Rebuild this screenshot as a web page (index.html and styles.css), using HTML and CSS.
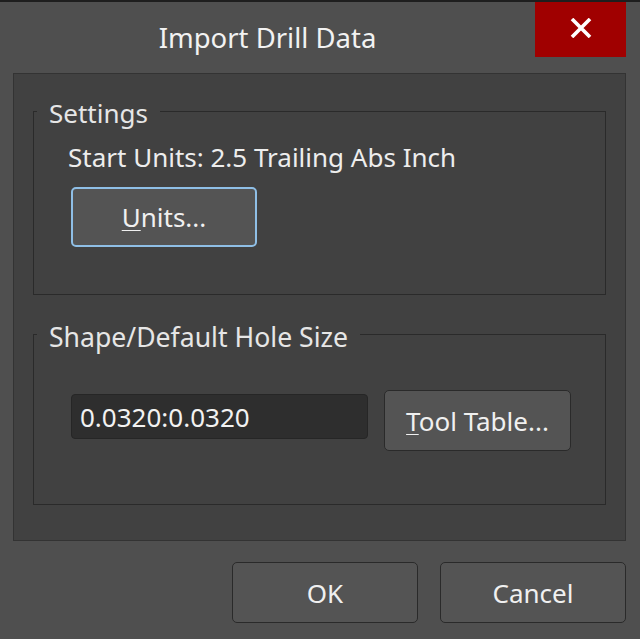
FILE: index.html
```html
<!DOCTYPE html>
<html>
<head>
<meta charset="utf-8">
<link rel="stylesheet" href="styles.css">
</head>
<body>
<div class="window">
  <div class="titlebar">
    <div class="title">Import Drill Data</div>
    <div class="close">
      <svg width="22" height="20" viewBox="0 0 22 20"><path d="M2 1 L20 19 M20 1 L2 19" stroke="#fff" stroke-width="3.6" fill="none"/></svg>
    </div>
  </div>
  <div class="panel">
    <div class="group group-settings">
      <div class="legend">Settings</div>
      <div class="line">Start Units: 2.5 Trailing Abs Inch</div>
      <button class="btn btn-focus units"><u>U</u>nits...</button>
    </div>
    <div class="group group-shape">
      <div class="legend">Shape/Default Hole Size</div>
      <div class="row">
        <div class="input">0.0320:0.0320</div>
        <button class="btn tool"><u>T</u>ool Table...</button>
      </div>
    </div>
  </div>
  <div class="footer">
    <button class="btn foot">OK</button>
    <button class="btn foot">Cancel</button>
  </div>
</div>
</body>
</html>
```
FILE: styles.css
```css
* { box-sizing: border-box; }
html, body { margin: 0; padding: 0; background: #4f4f4f; }
body { font-family: "Noto Sans", "Open Sans", sans-serif; color: #ededed; }
.window {
  width: 640px; height: 639px; background: #4f4f4f;
  border-top: 2px solid #1e1e1e; overflow: hidden;
}
.titlebar { display: flex; height: 55px; }
.title {
  flex: 1; text-align: center; font-size: 27.5px; line-height: 40px;
  padding-top: 16px; color: #f2f2f2;
}
.close {
  width: 91px; height: 55px; margin-right: 14px; background: #a00000;
  display: flex; align-items: center; justify-content: center;
  padding-bottom: 4px;
}
.panel {
  margin: 16px 14px 0 13px; height: 468px; background: #414141;
  border: 1px solid #333; padding: 37px 19px 0 19px;
}
.group { border: 1px solid #2a2a2a; }
.legend {
  display: block; width: max-content; background: #414141; font-size: 26px; line-height: 32px;
  padding: 0 12px; margin: -15px 0 0 3px; color: #e6e6e6;
}
.group-settings { height: 184px; }
.group-shape { height: 171px; margin-top: 39px; }
.group-shape .legend { margin-top: -14px; font-size: 26.6px; }
.line { font-size: 26px; line-height: 32px; margin: 12px 0 0 34px; }
.btn {
  font-family: inherit; color: #f0f0f0; font-size: 26px; line-height: 32px;
  background: #545454; border: 1px solid #2a2a2a; border-radius: 5px;
  padding: 0; cursor: default;
}
.btn u { text-decoration-thickness: 1px; text-underline-offset: 3px; }
.btn-focus { border: 2px solid #8fbfe6; }
.units { width: 186px; height: 60px; margin: 14px 0 0 37px; display: block; }
.row { display: flex; align-items: flex-start; margin: 37px 0 0 37px; gap: 16px; }
.input {
  width: 297px; height: 45px; margin-top: 4px; background: #2e2e2e; border: 1px solid #262626;
  border-radius: 4px; font-size: 26px; line-height: 41px; padding: 2px 0 0 8px; color: #f2f2f2;
}
.tool { width: 187px; height: 61px; }
.footer { display: flex; justify-content: flex-end; gap: 22px; padding: 21px 14px 0 0; }
.foot { width: 186px; height: 61px; }
```
